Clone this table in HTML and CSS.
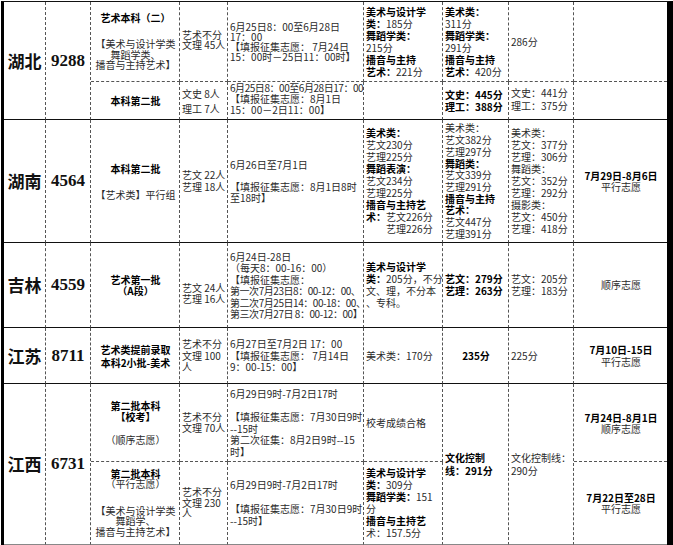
FILE: index.html
```html
<!DOCTYPE html>
<html lang="zh-CN">
<head>
<meta charset="utf-8">
<title>艺术类录取</title>
<link rel="stylesheet" href="styles.css">
</head>
<body>
<div class="grid">
  <!-- 湖北 row 1 -->
  <div class="c ctr prov s2"><div>湖北</div></div>
  <div class="c ctr num s2"><div>9288</div></div>
  <div class="c ctr d l105"><div><b>艺术本科（二）</b><div class="sp16"></div>【美术与设计学类<br>舞蹈学类、<br>播音与主持艺术】</div></div>
  <div class="c d l10 up"><div>艺术不分<br>文理 45人</div></div>
  <div class="c d l10"><div>6月25日8：00至6月28日<br>17：00<br>【填报征集志愿： 7月24日<br>15：00时－25日11：00时】</div></div>
  <div class="c d l12"><div><b>美术与设计学</b><br><b>类：</b>185分<br><b>舞蹈学类：</b><br>215分<br><b>播音与主持</b><br><b>艺术：</b>221分</div></div>
  <div class="c d l12"><div><b>美术类：</b><br>311分<br><b>舞蹈学类：</b><br>291分<br><b>播音与主持</b><br><b>艺术：</b>420分</div></div>
  <div class="c d"><div>286分</div></div>
  <div class="c d last"><div></div></div>
  <!-- 湖北 row 2 -->
  <div class="c ctr"><div><b>本科第二批</b></div></div>
  <div class="c l15"><div>文史 8人<br>理工 7人</div></div>
  <div class="c l11 up"><div><span class="tt">6月25日8：00至6月28日17：00</span><br>【填报征集志愿：8月1日<br>15：00－2日11：00】</div></div>
  <div class="c"><div></div></div>
  <div class="c l12"><div><b>文史：445分<br>理工：388分</b></div></div>
  <div class="c l13 up"><div>文史：441分<br>理工：375分</div></div>
  <div class="c last"><div></div></div>
  <!-- 湖南 -->
  <div class="c ctr prov"><div>湖南</div></div>
  <div class="c ctr num"><div>4564</div></div>
  <div class="c ctr l11"><div><b>本科第二批</b><div class="sp15"></div>【艺术类】平行组</div></div>
  <div class="c l12"><div>艺文 22人<br>艺理 18人</div></div>
  <div class="c l11"><div>6月26日至7月1日<br><br>【填报征集志愿：8月1日8时<br>至18时】</div></div>
  <div class="c l12"><div><b>美术类：</b><br>艺文230分<br>艺理225分<br><b>舞蹈表演：</b><br>艺文234分<br>艺理225分<br><b>播音与主持艺</b><br><b>术：</b>艺文226分<br><span class="ind">艺理226分</span></div></div>
  <div class="c l117"><div>美术类：<br>艺文382分<br>艺理297分<br><b>舞蹈类：</b><br>艺文339分<br>艺理291分<br><b>播音与主持</b><br><b>艺术：</b><br>艺文447分<br>艺理391分</div></div>
  <div class="c l12"><div>美术类：<br>艺文：377分<br>艺理：306分<br>舞蹈类：<br>艺文：352分<br>艺理：292分<br>摄影类：<br>艺文：450分<br>艺理：418分</div></div>
  <div class="c ctr l11 last"><div><b>7月29日-8月6日</b><br>平行志愿</div></div>
  <!-- 吉林 -->
  <div class="c ctr prov"><div>吉林</div></div>
  <div class="c ctr num"><div>4559</div></div>
  <div class="c ctr l11"><div><b>艺术第一批<br>（A段）</b></div></div>
  <div class="c l11 down"><div>艺文 24人<br>艺理 16人</div></div>
  <div class="c l115"><div>6月24日-28日<br>（每天8：00-16：00）<br>【填报征集志愿：<br><span class="tt">第一次7月23日8：00-12：00、</span><br><span class="tt">第二次7月25日14：00-18：00、</span><br><span class="tt">第三次7月27日 8：00-12：00】</span></div></div>
  <div class="c l12"><div><b>美术与设计学</b><br><b>类：</b>205分，不分<br>文、理，不分本<br>、专科。</div></div>
  <div class="c l12"><div><b>艺文：279分<br>艺理：263分</b></div></div>
  <div class="c l12"><div>艺文：205分<br>艺理：183分</div></div>
  <div class="c ctr last"><div>顺序志愿</div></div>
  <!-- 江苏 -->
  <div class="c ctr prov"><div>江苏</div></div>
  <div class="c ctr num"><div>8711</div></div>
  <div class="c ctr l13"><div><b>艺术类提前录取<br>本科2小批-美术</b></div></div>
  <div class="c l115"><div>艺术不分<br>文理 100<br>人</div></div>
  <div class="c l115"><div>6月27日至7月2日 17：00<br>【填报征集志愿： 7月14日<br>9：00-15：00】</div></div>
  <div class="c"><div>美术类：170分</div></div>
  <div class="c ctr"><div><b>235分</b></div></div>
  <div class="c"><div>225分</div></div>
  <div class="c ctr l12 last"><div><b>7月10日-15日</b><br>平行志愿</div></div>
  <!-- 江西 row 1 -->
  <div class="c ctr prov s2 bot"><div>江西</div></div>
  <div class="c ctr num s2 bot"><div>6731</div></div>
  <div class="c ctr d l11"><div><b>第二批本科</b><br><b>【校考】</b><div class="sp12"></div>（顺序志愿）</div></div>
  <div class="c d l105"><div>艺术不分<br>文理 70人</div></div>
  <div class="c d l115"><div>6月29日9时-7月2日17时<br><br>【填报征集志愿：7月30日9时<br>--15时<br>第二次征集：8月2日9时--15<br>时】</div></div>
  <div class="c d"><div>校考成绩合格</div></div>
  <div class="c s2 bot l13"><div><b>文化控制<br>线：291分</b></div></div>
  <div class="c s2 bot l13"><div>文化控制线：<br>290分</div></div>
  <div class="c ctr d l11 last"><div><b>7月24日-8月1日</b><br>顺序志愿</div></div>
  <!-- 江西 row 2 -->
  <div class="c ctr bot l105"><div><b>第二批本科</b><br>（平行志愿）<div class="sp16"></div>【美术与设计学类<br>舞蹈学、<br>播音与主持艺术】</div></div>
  <div class="c bot l105"><div>艺术不分<br>文理 230<br>人</div></div>
  <div class="c bot l12"><div>6月29日9时-7月2日17时<br><br>【填报征集志愿：7月30日9时<br>--15时】</div></div>
  <div class="c bot l12"><div><b>美术与设计学</b><br><b>类：</b>309分<br><b>舞蹈学类：</b>151<br>分<br><b>播音与主持艺</b><br>术：157.5分</div></div>
  <div class="c ctr bot l11 last"><div><b>7月22日至28日</b><br>平行志愿</div></div>
</div>
</body>
</html>
```
FILE: styles.css
```css
html, body {
  margin: 0;
  padding: 0;
  background: #fff;
}
body {
  font-family: "Noto Sans CJK SC", "Noto Sans", sans-serif;
  font-size: 10px;
  color: #2a2a2a;
}
.grid {
  display: grid;
  grid-template-columns: 42px 45px 89px 48px 136px 79px 66px 65px 93px;
  grid-template-rows: 80px 38px 123px 85px 56px 78px 83px;
  width: 663px;
  margin: 1px 0 0 1px;
  border-top: 1px solid #111;
  border-left: 3px solid #000;
  border-right: 6px solid #000;
}
.c {
  box-sizing: border-box;
  display: flex;
  flex-direction: column;
  justify-content: center;
  padding: 0 1px 0 2px;
  border-right: 1px dashed #555;
  border-bottom: 1px solid #111;
  white-space: nowrap;
  line-height: 12px;
  min-width: 0;
}
.c.d {
  border-bottom: 1px dashed #555;
}
.c.bot {
  border-bottom: 1px solid #888;
}
.c.last {
  border-right: none;
}
.s2 {
  grid-row: span 2;
}
.ctr {
  align-items: center;
  text-align: center;
}
b {
  font-weight: 700;
  color: #000;
}
.prov {
  font-size: 17px;
  font-weight: 700;
  color: #111;
  line-height: 20px;
  padding: 0;
}
.num {
  font-family: "Liberation Serif", serif;
  font-size: 17px;
  font-weight: 700;
  color: #111;
  line-height: 20px;
  padding: 0;
}
.tt {
  letter-spacing: -0.45px;
}
.l10 { line-height: 10px; }
.l105 { line-height: 10.5px; }
.l11 { line-height: 11px; }
.l115 { line-height: 11.5px; }
.l117 { line-height: 11.7px; }
.l12 { line-height: 12px; }
.l13 { line-height: 13px; }
.l15 { line-height: 15px; }
.sp12 { height: 12px; }
.sp15 { height: 15px; }
.sp16 { height: 16px; }
.ind { padding-left: 20px; }
.up { padding-bottom: 4px; }
.down { padding-top: 16px; }
```
